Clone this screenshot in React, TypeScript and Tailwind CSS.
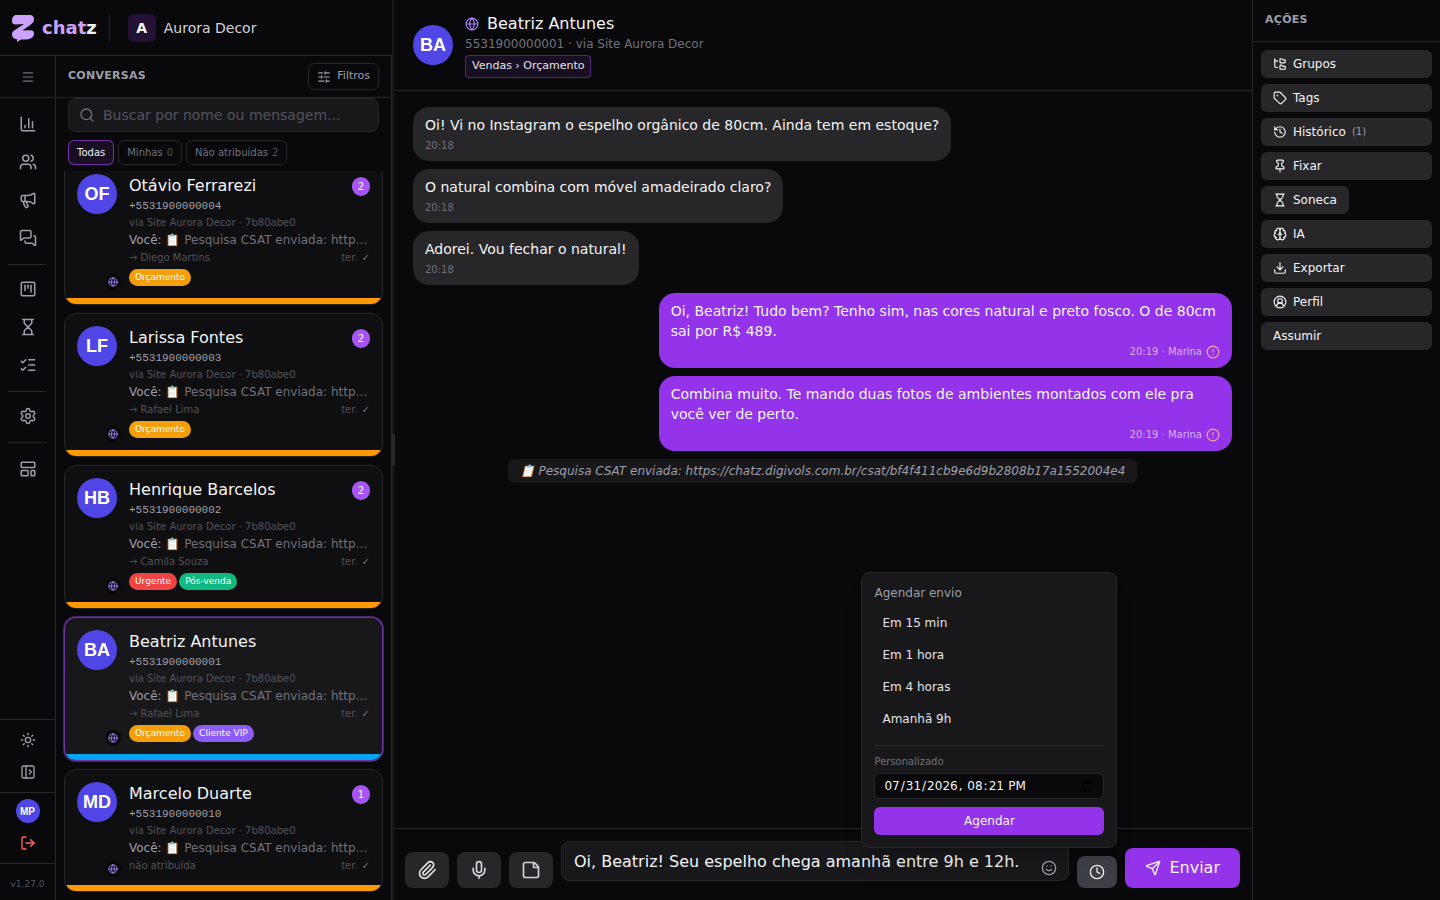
import React from "react";
import {
  Brain,
  ChartColumn,
  CircleAlert,
  CircleUserRound,
  Clock,
  Download,
  FolderTree,
  Globe,
  History,
  Hourglass,
  LayoutTemplate,
  ListChecks,
  LogOut,
  Megaphone,
  Menu,
  MessagesSquare,
  Mic,
  PanelLeftOpen,
  Paperclip,
  Pin,
  Search,
  Send,
  Settings,
  SlidersHorizontal,
  Smile,
  SquareKanban,
  StickyNote,
  Sun,
  Tag,
  Users,
} from "lucide-react";

const navGroups = [
  [
    { label: "Painel", Icon: ChartColumn },
    { label: "Contatos", Icon: Users },
    { label: "Campanhas", Icon: Megaphone },
    { label: "Conversas", Icon: MessagesSquare },
  ],
  [
    { label: "Kanban", Icon: SquareKanban },
    { label: "Sonecas", Icon: Hourglass },
    { label: "Tarefas", Icon: ListChecks },
  ],
  [{ label: "Configurações", Icon: Settings }],
  [{ label: "Modelos", Icon: LayoutTemplate }],
];

const tagColors: Record<string, string> = {
  Orçamento: "bg-[#f59e0b]",
  Urgente: "bg-[#ef4444]",
  "Pós-venda": "bg-[#10b981]",
  "Cliente VIP": "bg-[#8b5cf6]",
};

const conversations = [
  { initials: "OF", name: "Otávio Ferrarezi", phone: "+5531900000004", owner: "→ Diego Martins", unread: 2, tags: ["Orçamento"] },
  { initials: "LF", name: "Larissa Fontes", phone: "+5531900000003", owner: "→ Rafael Lima", unread: 2, tags: ["Orçamento"] },
  { initials: "HB", name: "Henrique Barcelos", phone: "+5531900000002", owner: "→ Camila Souza", unread: 2, tags: ["Urgente", "Pós-venda"] },
  { initials: "BA", name: "Beatriz Antunes", phone: "+5531900000001", owner: "→ Rafael Lima", unread: 0, tags: ["Orçamento", "Cliente VIP"], active: true },
  { initials: "MD", name: "Marcelo Duarte", phone: "+5531900000010", owner: "não atribuída", unread: 1, tags: [] },
];

const received = [
  "Oi! Vi no Instagram o espelho orgânico de 80cm. Ainda tem em estoque?",
  "O natural combina com móvel amadeirado claro?",
  "Adorei. Vou fechar o natural!",
];

const sent = [
  "Oi, Beatriz! Tudo bem? Tenho sim, nas cores natural e preto fosco. O de 80cm sai por R$ 489.",
  "Combina muito. Te mando duas fotos de ambientes montados com ele pra você ver de perto.",
];

const actions = [
  { label: "Grupos", Icon: FolderTree },
  { label: "Tags", Icon: Tag },
  { label: "Histórico", Icon: History, count: "(1)" },
  { label: "Fixar", Icon: Pin },
  { label: "Soneca", Icon: Hourglass, fit: true },
  { label: "IA", Icon: Brain },
  { label: "Exportar", Icon: Download },
  { label: "Perfil", Icon: CircleUserRound },
  { label: "Assumir" },
];

const presets = ["Em 15 min", "Em 1 hora", "Em 4 horas", "Amanhã 9h"];

const Logo = () => (
  <svg viewBox="0 0 22 28" className="h-7 w-[22px]" aria-hidden="true">
    <path
      fill="#cda2ff"
      d="M4.500 1H18c2.500 0 4 1.600 4 4.300 0 2.500-1.200 4-3.500 5.400L10.500 16.600l8-.4c2.300 0 3.500 1 3.500 3 0 4-3.500 6.200-7.500 6.200H9L5 28v-2.700C1.800 25 0 23 0 20.500c0-2.300 1-3.500 3.300-4.800L12 10l-8.500.5C1.200 10.500 0 9.500 0 7c0-3.500 1.500-6 4.500-6z"
    />
  </svg>
);

const Avatar = ({ initials }: { initials: string }) => (
  <div className="flex size-10 items-center justify-center rounded-full bg-[#4f46e5] font-['Liberation_Sans',sans-serif] text-lg font-bold text-white">
    {initials}
  </div>
);

const NavRail = () => (
  <nav className="flex w-14 shrink-0 flex-col border-r border-zinc-800 text-zinc-400">
    <button aria-label="Menu" className="flex h-[42px] shrink-0 items-center justify-center border-b border-zinc-800 text-zinc-500">
      <Menu size={14} />
    </button>
    <div className="flex min-h-0 flex-1 flex-col overflow-hidden pt-2">
      {navGroups.map((group, i) => (
        <div key={i} className="flex flex-col gap-0.5 last:[&>hr]:mb-1.5">
          {i > 0 && <hr className="mx-2 mt-2 mb-1 border-zinc-800" />}
          {group.map(({ label, Icon }) => (
            <a key={label} href="#" aria-label={label} className="flex h-9 items-center justify-center">
              <Icon size={18} />
            </a>
          ))}
        </div>
      ))}
    </div>
    <div className="flex flex-col border-t border-zinc-800 py-1">
      <button aria-label="Tema" className="flex h-8 items-center justify-center">
        <Sun size={16} />
      </button>
      <button aria-label="Expandir painel" className="flex h-8 items-center justify-center">
        <PanelLeftOpen size={16} />
      </button>
    </div>
    <div className="flex flex-col items-center gap-1 border-t border-zinc-800 pt-1.5 pb-1">
      <div className="flex size-6 items-center justify-center rounded-full bg-[#4f46e5] font-['Liberation_Sans',sans-serif] text-[10px] font-bold text-white">
        MP
      </div>
      <button aria-label="Sair" className="flex h-8 items-center justify-center text-red-400">
        <LogOut size={16} />
      </button>
    </div>
    <div className="border-t border-zinc-800 pt-3 pb-2 text-center text-[9px] leading-4 text-zinc-600">v1.27.0</div>
  </nav>
);

const ConversationCard = ({ item }: { item: (typeof conversations)[number] }) => (
  <article
    className={
      item.active
        ? "shrink-0 overflow-hidden rounded-xl border border-purple-500/60 bg-zinc-900 ring-1 ring-purple-500/40"
        : "shrink-0 overflow-hidden rounded-xl border border-zinc-800 bg-zinc-900/40"
    }
  >
    <div className="flex gap-3 p-3">
      <div className="relative shrink-0">
        <Avatar initials={item.initials} />
        <span className="absolute -right-1 -bottom-1 flex size-4 items-center justify-center rounded-full bg-zinc-950 text-violet-400">
          <Globe size={10} />
        </span>
      </div>
      <div className="min-w-0 flex-1">
        <div className="flex items-center justify-between">
          <h3 className="truncate text-base text-zinc-100">{item.name}</h3>
          {item.unread > 0 && (
            <span className="flex h-[19px] w-[18px] items-center justify-center rounded-full bg-[#a855f7] text-[10px] text-white">
              {item.unread}
            </span>
          )}
        </div>
        <p className="font-['Liberation_Mono',monospace] text-[11px] leading-4 text-zinc-400">{item.phone}</p>
        <p className="truncate text-[10px] leading-[18px] text-zinc-600">via Site Aurora Decor · 7b80abe0</p>
        <p className="truncate text-xs text-zinc-500">
          <span className="text-zinc-400">Você: </span>📋 Pesquisa CSAT enviada: https://chatz
        </p>
        <p className="mt-0.5 flex justify-between text-[10px] leading-[15px] text-zinc-600">
          <span>{item.owner}</span>
          <span className="flex gap-1">
            <span>ter.</span>
            <span className="text-zinc-500">✓</span>
          </span>
        </p>
        {item.tags.length > 0 && (
          <div className="mt-1 flex gap-0.5">
            {item.tags.map((tag) => (
              <span key={tag} className={`h-[17px] rounded-full px-1.5 text-[9px] leading-4 text-white ${tagColors[tag]}`}>
                {tag}
              </span>
            ))}
          </div>
        )}
      </div>
    </div>
    <div className={item.active ? "h-1.5 bg-[#00a6f4]" : "h-1.5 bg-[#fe9a00]"} />
  </article>
);

const ConversationList = () => (
  <section className="flex min-w-0 flex-1 flex-col">
    <div className="flex h-[42px] shrink-0 items-center justify-between border-b border-zinc-800 px-3">
      <h2 className="text-[11px] font-bold tracking-wide text-zinc-400">CONVERSAS</h2>
      <button className="flex h-[27px] items-center gap-1.5 rounded-md border border-zinc-800 px-2 text-[11px] text-zinc-400">
        <SlidersHorizontal size={14} />
        Filtros
      </button>
    </div>
    <div className="relative mx-3 shrink-0">
      <Search size={16} className="absolute top-[9px] left-[11px] text-zinc-500" />
      <input
        type="text"
        aria-label="Buscar conversas"
        placeholder="Buscar por nome ou mensagem..."
        className="block h-[34px] w-full rounded-lg border border-zinc-800 bg-zinc-900 pr-3 pl-[34px] text-sm placeholder:text-zinc-600"
      />
    </div>
    <div className="flex shrink-0 gap-1 px-3 pt-2 pb-1.5 text-[10px] leading-[15px] text-zinc-500">
      <button className="rounded-md border border-purple-500/60 bg-purple-500/10 px-2 py-1 text-zinc-100">Todas</button>
      <button className="flex gap-1 rounded-md border border-zinc-800 px-2 py-1">
        Minhas <span className="text-zinc-600">0</span>
      </button>
      <button className="flex gap-1 rounded-md border border-zinc-800 px-2 py-1">
        Não atribuídas <span className="text-zinc-600">2</span>
      </button>
    </div>
    <div className="flex min-h-0 flex-1 flex-col justify-end gap-2 overflow-hidden px-2 pb-2">
      {conversations.map((item) => (
        <ConversationCard key={item.name} item={item} />
      ))}
    </div>
  </section>
);

const SchedulePopover = () => (
  <div className="absolute right-0 bottom-full z-10 mb-2 w-64 rounded-lg border border-zinc-800 bg-zinc-900 p-3 shadow-xl">
    <p className="mb-2 text-xs text-zinc-400">Agendar envio</p>
    <div className="flex flex-col gap-1">
      {presets.map((preset) => (
        <button key={preset} className="h-7 rounded px-2 text-left text-xs text-zinc-200">
          {preset}
        </button>
      ))}
    </div>
    <div className="mt-3 border-t border-zinc-800 pt-2">
      <label htmlFor="custom-date" className="mb-1 block text-[10px] leading-[15px] text-zinc-500">
        Personalizado
      </label>
      <input
        id="custom-date"
        type="datetime-local"
        defaultValue="2026-07-31T20:21"
        className="block h-[26px] w-full rounded-md border border-zinc-800 bg-zinc-950 px-2 text-xs text-zinc-100"
      />
      <button className="mt-2 h-7 w-full rounded-md bg-[#9333ea] text-xs text-zinc-100">Agendar</button>
    </div>
  </div>
);

const Composer = () => (
  <footer className="flex shrink-0 items-end gap-2 border-t border-zinc-800 p-3">
    <button aria-label="Anexar" className="flex h-9 w-11 items-center justify-center rounded-lg bg-zinc-800 text-zinc-200">
      <Paperclip size={20} />
    </button>
    <button aria-label="Gravar áudio" className="flex h-9 w-11 items-center justify-center rounded-lg bg-zinc-800 text-zinc-300">
      <Mic size={20} />
    </button>
    <button aria-label="Nota" className="flex h-9 w-11 items-center justify-center rounded-lg bg-zinc-800 text-zinc-300">
      <StickyNote size={20} />
    </button>
    <div className="relative min-w-0 flex-1 pb-[7px]">
      <textarea
        rows={1}
        aria-label="Mensagem"
        defaultValue="Oi, Beatriz! Seu espelho chega amanhã entre 9h e 12h."
        className="block h-10 w-full resize-none overflow-hidden rounded-lg border border-zinc-800 bg-zinc-900 pt-2 pr-10 pb-1.5 pl-3 text-base text-zinc-100"
      />
      <button aria-label="Emoji" className="absolute right-3 bottom-3 text-zinc-400">
        <Smile size={16} />
      </button>
    </div>
    <div className="relative">
      <SchedulePopover />
      <button aria-label="Agendar envio" className="flex h-8 w-10 items-center justify-center rounded-lg bg-zinc-700 text-zinc-100">
        <Clock size={16} />
      </button>
    </div>
    <button className="flex h-10 items-center gap-2 rounded-lg bg-[#9333ea] px-5 text-base text-zinc-100">
      <Send size={16} />
      Enviar
    </button>
  </footer>
);

const Chat = () => (
  <main className="flex min-w-0 flex-1 flex-col">
    <header className="flex shrink-0 items-center gap-3 border-b border-zinc-800 px-5 py-3">
      <Avatar initials="BA" />
      <div>
        <div className="flex items-center gap-2">
          <Globe size={14} className="text-violet-400" />
          <h1 className="text-base text-zinc-100">Beatriz Antunes</h1>
        </div>
        <p className="text-xs text-zinc-500">5531900000001 · via Site Aurora Decor</p>
        <span className="mt-[3px] block h-[23px] w-fit rounded border border-purple-500/40 bg-purple-500/10 px-1.5 text-[11px] leading-5 text-zinc-200">
          Vendas › Orçamento
        </span>
      </div>
    </header>
    <div className="flex min-h-0 flex-1 flex-col gap-2 overflow-hidden px-5 py-4 text-sm">
      {received.map((text) => (
        <div key={text} className="max-w-[70%] self-start rounded-2xl bg-zinc-800 px-3 py-2 text-zinc-100">
          <p>{text}</p>
          <time className="mt-1 block text-[10px] leading-[14px] text-zinc-500">20:18</time>
        </div>
      ))}
      {sent.map((text) => (
        <div key={text} className="max-w-[70%] self-end rounded-2xl bg-[#9333ea] px-3 py-2 text-zinc-100">
          <p>{text}</p>
          <div className="mt-[3px] flex items-center justify-end gap-1 text-[10px] leading-4 text-[#dab2ff]">
            20:19 · Marina
            <CircleAlert size={14} className="text-red-300" />
          </div>
        </div>
      ))}
      <p className="self-center rounded-md bg-zinc-900 px-3 py-1 text-xs text-zinc-400 italic">
        📋 Pesquisa CSAT enviada: https://chatz.digivols.com.br/csat/bf4f411cb9e6d9b2808b17a1552004e4
      </p>
    </div>
    <Composer />
  </main>
);

const ActionsPanel = () => (
  <aside className="w-[188px] shrink-0 border-l border-zinc-800">
    <h2 className="flex h-[42px] items-center border-b border-zinc-800 px-3 text-[11px] font-bold tracking-wide text-zinc-400">
      AÇÕES
    </h2>
    <div className="flex flex-col gap-1.5 p-2">
      {actions.map(({ label, Icon, count, fit }) => (
        <button
          key={label}
          className={`flex h-7 items-center gap-1.5 rounded-md bg-zinc-800 px-3 text-xs text-zinc-100 ${fit ? "self-start" : ""}`}
        >
          {Icon && <Icon size={14} />}
          {label}
          {count && <span className="text-[10px] text-zinc-400">{count}</span>}
        </button>
      ))}
    </div>
  </aside>
);

const App = () => {
  return (
    <div className="flex h-screen overflow-hidden bg-zinc-950 font-['DejaVu_Sans',sans-serif] text-zinc-100">
      <div className="flex w-98 shrink-0 flex-col">
        <header className="flex h-14 shrink-0 items-center border-b border-zinc-800 pl-3">
          <a href="#" className="flex items-center gap-2 text-lg font-bold">
            <Logo />
            <span>
              <span className="text-[#cda2ff]">chat</span>z
            </span>
          </a>
          <div className="ml-3 h-7 w-px bg-zinc-800" />
          <div className="ml-[18px] flex items-center gap-2">
            <span className="flex size-7 items-center justify-center rounded-md bg-[#231136] text-sm font-bold text-white">A</span>
            <span className="text-sm text-zinc-300">Aurora Decor</span>
          </div>
        </header>
        <div className="flex min-h-0 flex-1 border-r border-zinc-800">
          <NavRail />
          <ConversationList />
        </div>
      </div>
      {/* drag handle between the list and the chat */}
      <div className="relative -mr-px w-0.5 shrink-0 bg-zinc-900">
        <div className="absolute top-1/2 -left-px h-8 w-1 -translate-y-1/2 bg-zinc-800" />
      </div>
      <Chat />
      <ActionsPanel />
    </div>
  );
};

export default App;
